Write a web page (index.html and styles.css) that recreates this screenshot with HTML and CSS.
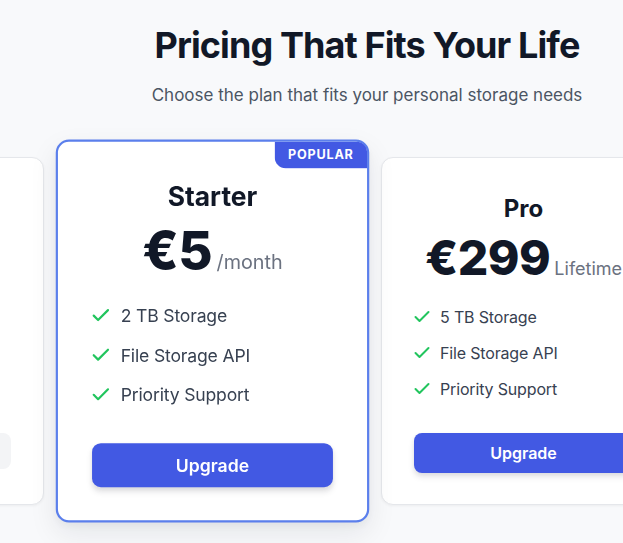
FILE: index.html
```html
<!DOCTYPE html>
<html lang="en">
<head>
<meta charset="utf-8">
<title>Pricing</title>
<link rel="stylesheet" href="styles.css">
</head>
<body>
<main class="page">
  <header class="header">
    <h1 class="title">Pricing That Fits Your Life</h1>
    <p class="subtitle">Choose the plan that fits your personal storage needs</p>
  </header>
  <section class="plans">
    <article class="card">
      <h2 class="plan-name">Free</h2>
      <div class="price"><span class="amount">€0</span><span class="period">/month</span></div>
      <ul class="features">
        <li class="feature"><svg class="check" viewBox="0 0 16 16"><path d="M1.5 8 L5.5 12 L14.5 3"/></svg><span>500 GB Storage</span></li>
        <li class="feature"><svg class="check" viewBox="0 0 16 16"><path d="M1.5 8 L5.5 12 L14.5 3"/></svg><span>Basic Sharing</span></li>
        <li class="feature"><svg class="check" viewBox="0 0 16 16"><path d="M1.5 8 L5.5 12 L14.5 3"/></svg><span>Email Support</span></li>
      </ul>
      <div class="btn-row"><button class="btn btn-current">Current</button></div>
    </article>
    <article class="card card-popular">
      <span class="badge">POPULAR</span>
      <h2 class="plan-name">Starter</h2>
      <div class="price"><span class="amount">€5</span><span class="period">/month</span></div>
      <ul class="features">
        <li class="feature"><svg class="check" viewBox="0 0 16 16"><path d="M1.5 8 L5.5 12 L14.5 3"/></svg><span>2 TB Storage</span></li>
        <li class="feature"><svg class="check" viewBox="0 0 16 16"><path d="M1.5 8 L5.5 12 L14.5 3"/></svg><span>File Storage API</span></li>
        <li class="feature"><svg class="check" viewBox="0 0 16 16"><path d="M1.5 8 L5.5 12 L14.5 3"/></svg><span>Priority Support</span></li>
      </ul>
      <div class="btn-row"><button class="btn btn-primary">Upgrade</button></div>
    </article>
    <article class="card">
      <h2 class="plan-name">Pro</h2>
      <div class="price"><span class="amount">€299</span><span class="period">Lifetime</span></div>
      <ul class="features">
        <li class="feature"><svg class="check" viewBox="0 0 16 16"><path d="M1.5 8 L5.5 12 L14.5 3"/></svg><span>5 TB Storage</span></li>
        <li class="feature"><svg class="check" viewBox="0 0 16 16"><path d="M1.5 8 L5.5 12 L14.5 3"/></svg><span>File Storage API</span></li>
        <li class="feature"><svg class="check" viewBox="0 0 16 16"><path d="M1.5 8 L5.5 12 L14.5 3"/></svg><span>Priority Support</span></li>
      </ul>
      <div class="btn-row"><button class="btn btn-primary">Upgrade</button></div>
    </article>
  </section>
</main>
</body>
</html>
```
FILE: styles.css
```css
* { box-sizing: border-box; }
html, body {
  margin: 0;
  padding: 0;
  background: #f8f9fb;
  overflow: hidden;
}
body {
  font-family: Inter, "Liberation Sans", sans-serif;
  color: #111827;
  width: 623px;
  height: 543px;
}
.page {
  padding-top: 25px;
}
.header {
  padding-left: 111px;
  display: flex;
  flex-direction: column;
  align-items: center;
}
.title {
  margin: 0;
  font-size: 36px;
  line-height: 40px;
  font-weight: 700;
  color: #111827;
  letter-spacing: -0.025em;
}
.subtitle {
  margin: 16px 0 0;
  font-size: 17px;
  line-height: 28px;
  color: #4b5563;
}
.plans {
  display: flex;
  gap: 26px;
  margin-top: 48px;
  margin-left: -241px;
  width: 907px;
}
.card {
  position: relative;
  flex: 0 0 285px;
  width: 285px;
  height: 348px;
  background: #ffffff;
  border: 1px solid #e5e7eb;
  border-radius: 12px;
  padding: 35px 32px 32px;
  display: flex;
  flex-direction: column;
  align-items: center;
  box-shadow: 0 1px 3px rgba(0, 0, 0, 0.05);
}
.card-popular {
  border: 2px solid #5b7fec;
  padding: 34px 31px 31px;
  transform: scale(1.1);
  z-index: 2;
  box-shadow: 0 10px 25px rgba(17, 24, 39, 0.08), 0 4px 8px rgba(17, 24, 39, 0.04);
}
.badge {
  position: absolute;
  top: 0;
  right: 0;
  width: 84px;
  height: 24px;
  background: #4259e3;
  color: #ffffff;
  font-size: 11.5px;
  font-weight: 700;
  letter-spacing: 0.06em;
  line-height: 24px;
  text-align: center;
  border-radius: 0 9px 0 10px;
}
.plan-name {
  margin: 0;
  font-size: 24px;
  line-height: 32px;
  font-weight: 700;
  color: #111827;
}
.price {
  margin-top: 9px;
  display: flex;
  align-items: baseline;
  gap: 4px;
}
.amount {
  font-size: 48px;
  line-height: 48px;
  font-weight: 800;
  color: #111827;
  letter-spacing: -0.01em;
}
.period {
  font-size: 18px;
  color: #6b7280;
}
.features {
  list-style: none;
  align-self: stretch;
  margin: 23px 0 0;
  padding: 0;
  display: flex;
  flex-direction: column;
  align-items: flex-start;
  gap: 12px;
}
.feature {
  display: flex;
  align-items: center;
  gap: 10px;
  font-size: 16px;
  line-height: 24px;
  color: #374151;
  letter-spacing: -0.01em;
}
.check {
  width: 16px;
  height: 16px;
  flex: 0 0 16px;
  fill: none;
  stroke: #22c55e;
  stroke-width: 2;
  stroke-linecap: round;
  stroke-linejoin: round;
}
.btn-row {
  align-self: stretch;
  margin-top: 32px;
  display: flex;
}
.btn {
  flex: 1;
  height: 40px;
  border: none;
  border-radius: 8px;
  font-family: inherit;
  font-size: 16px;
  font-weight: 600;
}
.btn-primary {
  background: #4259e3;
  color: #ffffff;
  box-shadow: 0 4px 6px rgba(17, 24, 39, 0.1), 0 2px 4px rgba(17, 24, 39, 0.06);
}
.btn-current {
  height: 36px;
  background: #f3f4f6;
  color: #6b7280;
}
```
